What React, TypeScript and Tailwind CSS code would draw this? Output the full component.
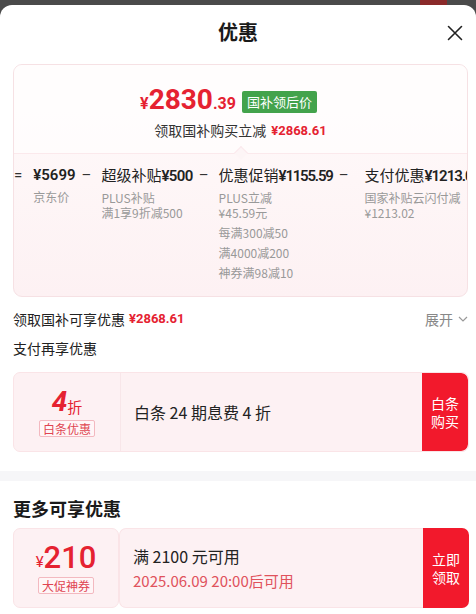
import React from "react";

const F = { fontFamily: '"Noto Sans CJK SC", "Noto Sans", sans-serif' };
const N = { fontFamily: 'Roboto, "Noto Sans CJK SC", sans-serif' };

function Dash() {
  return <span className="text-[15px] leading-[20px] text-[#333] pl-[6px] pr-[10px]" style={N}>–</span>;
}

export default function App() {
  return (
    <div className="w-[476px] h-[614px] bg-[#4a4a4a] overflow-hidden relative" style={F}>
      <div className="absolute right-[29px] top-0 w-[27px] h-[6px] bg-[#8a2a2a]" />
      <div className="relative mt-[5px] h-[609px] bg-white rounded-t-[12px] flex flex-col">
        {/* header */}
        <div className="relative h-[56px] flex items-center justify-center">
          <span className="text-[20px] font-semibold text-[#1a1a1a] mt-[-2px]">优惠</span>
          <svg className="absolute right-[13px] top-[20px]" width="16" height="16" viewBox="0 0 16 16">
            <path d="M1.5 1.5 L14.5 14.5 M14.5 1.5 L1.5 14.5" stroke="#222" strokeWidth="1.6" strokeLinecap="round" />
          </svg>
        </div>

        {/* summary card */}
        <div className="ml-[13px] mr-[8px] mt-[3px] h-[233px] rounded-[9px] border border-[#f6e1e4] bg-gradient-to-b from-[#fffbfb] to-[#fdf1f3] overflow-hidden flex flex-col">
          <div className="h-[88px] flex flex-col items-center bg-white/60">
            <div className="flex items-end mt-[20px] h-[30px] mr-[24px]">
              <span className="text-[#e52231] text-[16px] font-bold leading-[20px] mb-[1px]" style={N}>¥</span>
              <span className="text-[#e52231] text-[28px] font-bold leading-[30px]" style={N}>2830</span>
              <span className="text-[#e52231] text-[16px] font-bold leading-[20px] mb-[1px]" style={N}>.39</span>
              <span className="ml-[6px] mb-[2px] bg-[#43a34c] text-white text-[13px] leading-[22px] px-[5px] rounded-[2px]">国补领后价</span>
            </div>
            <div className="mt-[5px] flex items-center text-[14px] text-[#333]">
              <span>领取国补购买立减</span>
              <span className="ml-[5px] text-[#e52231] text-[13px] font-bold" style={N}>¥2868.61</span>
            </div>
          </div>
          <div className="relative h-0 border-t border-[#fbe9ec]">
            <div className="absolute left-[222px] top-[-6px] w-[10px] h-[10px] rotate-45 bg-[#fdf5f6] border-l border-t border-[#fbe9ec]" />
          </div>
          <div className="flex flex-1 whitespace-nowrap pt-[11px]">
            <span className="text-[15px] leading-[20px] text-[#333] pr-[11px]" style={N}>=</span>
            <div className="flex flex-col">
              <span className="text-[15px] leading-[20px] font-semibold text-[#222]" style={N}>¥5699</span>
              <span className="text-[12px] leading-[15px] text-[#999] mt-[4px]">京东价</span>
            </div>
            <Dash />
            <div className="flex flex-col">
              <span className="text-[15px] leading-[20px] text-[#222]">超级补贴<span className="font-semibold tracking-[-0.6px]" style={N}>¥500</span></span>
              <span className="text-[12px] leading-[15px] text-[#999] mt-[4px]">PLUS补贴</span>
              <span className="text-[12px] leading-[15px] text-[#999]">满1享9折减500</span>
            </div>
            <Dash />
            <div className="flex flex-col">
              <span className="text-[15px] leading-[20px] text-[#222]">优惠促销<span className="font-semibold tracking-[-1.2px]" style={N}>¥1155.59</span></span>
              <span className="text-[12px] leading-[15px] text-[#999] mt-[4px]">PLUS立减</span>
              <span className="text-[12px] leading-[15px] text-[#999]">¥45.59元</span>
              <span className="text-[12px] leading-[15px] text-[#999] mt-[5px]">每满300减50</span>
              <span className="text-[12px] leading-[15px] text-[#999] mt-[5px]">满4000减200</span>
              <span className="text-[12px] leading-[15px] text-[#999] mt-[5px]">神券满98减10</span>
            </div>
            <Dash />
            <div className="flex flex-col pl-[6px]">
              <span className="text-[15px] leading-[20px] text-[#222]">支付优惠<span className="font-semibold tracking-[-1px]" style={N}>¥1213.02</span></span>
              <span className="text-[12px] leading-[15px] text-[#999] mt-[4px]">国家补贴云闪付减</span>
              <span className="text-[12px] leading-[15px] text-[#999]">¥1213.02</span>
            </div>
          </div>
        </div>

        {/* subsidy row */}
        <div className="ml-[13px] mr-[8px] mt-[12px] flex items-center justify-between h-[20px]">
          <div className="flex items-center text-[14px] text-[#222]">
            <span>领取国补可享优惠</span>
            <span className="ml-[4px] text-[#e52231] text-[13px] font-bold" style={N}>¥2868.61</span>
          </div>
          <div className="flex items-center text-[14px] text-[#888]">
            <span>展开</span>
            <svg className="ml-[5px]" width="10" height="6" viewBox="0 0 10 6">
              <path d="M1 1 L5 5 L9 1" stroke="#999" strokeWidth="1.2" fill="none" />
            </svg>
          </div>
        </div>
        <div className="mx-[13px] mt-[9px] text-[14px] text-[#222] leading-[20px]">支付再享优惠</div>

        {/* baitiao card */}
        <div className="ml-[13px] mr-[7px] mt-[14px] h-[80px] flex rounded-[7px] bg-[#fdf1f3] border border-[#fae4e7] overflow-hidden">
          <div className="w-[107px] flex flex-col items-center justify-center border-r border-[#f8e6e9]">
            <div className="flex items-end leading-none">
              <span className="text-[#e52231] text-[28px] font-bold italic" style={N}>4</span>
              <span className="text-[#e52231] text-[15px] mb-[2px]">折</span>
            </div>
            <span className="mt-[4px] text-[12px] leading-[15px] text-[#e04552] border border-[#f3b9c0] rounded-[2px] px-[3px] bg-[#fff6f7]">白条优惠</span>
          </div>
          <div className="flex-1 flex items-center pl-[13px] text-[16px] text-[#222]">白条 24 期息费 4 折</div>
          <div className="w-[46px] bg-[#f2192c] flex items-center justify-center rounded-r-[7px]">
            <span className="text-white text-[14px] leading-[18px] text-center">白条<br />购买</span>
          </div>
        </div>

        <div className="mt-[19px] h-[10px] bg-[#f6f6f8]" />

        <div className="mx-[13px] mt-[15px] text-[18px] font-bold text-[#1a1a1a] leading-[24px]">更多可享优惠</div>

        {/* coupon card */}
        <div className="ml-[13px] mr-[7px] mt-[8px] h-[80px] flex">
          <div className="w-[106px] flex flex-col items-center justify-center rounded-[7px] bg-[#fdf1f3] border border-[#fae4e7]">
            <div className="flex items-end leading-none">
              <span className="text-[#e52231] text-[15px] mb-[3px]" style={N}>¥</span>
              <span className="text-[#e52231] text-[31px] font-medium" style={N}>210</span>
            </div>
            <span className="mt-[4px] text-[12px] leading-[15px] text-[#e04552] border border-[#f3b9c0] rounded-[2px] px-[3px] bg-[#fff6f7]">大促神券</span>
          </div>
          <div className="flex-1 flex flex-col justify-center pl-[13px] rounded-l-[7px] bg-[#fdf1f3] border border-[#fae4e7] border-r-0">
            <span className="text-[16px] text-[#222] leading-[22px]">满 2100 元可用</span>
            <span className="text-[15px] text-[#e0525c] leading-[20px] mt-[4px]">2025.06.09 20:00后可用</span>
          </div>
          <div className="w-[46px] bg-[#f2192c] flex items-center justify-center rounded-r-[7px]">
            <span className="text-white text-[14px] leading-[18px] text-center">立即<br />领取</span>
          </div>
        </div>
      </div>
    </div>
  );
}
